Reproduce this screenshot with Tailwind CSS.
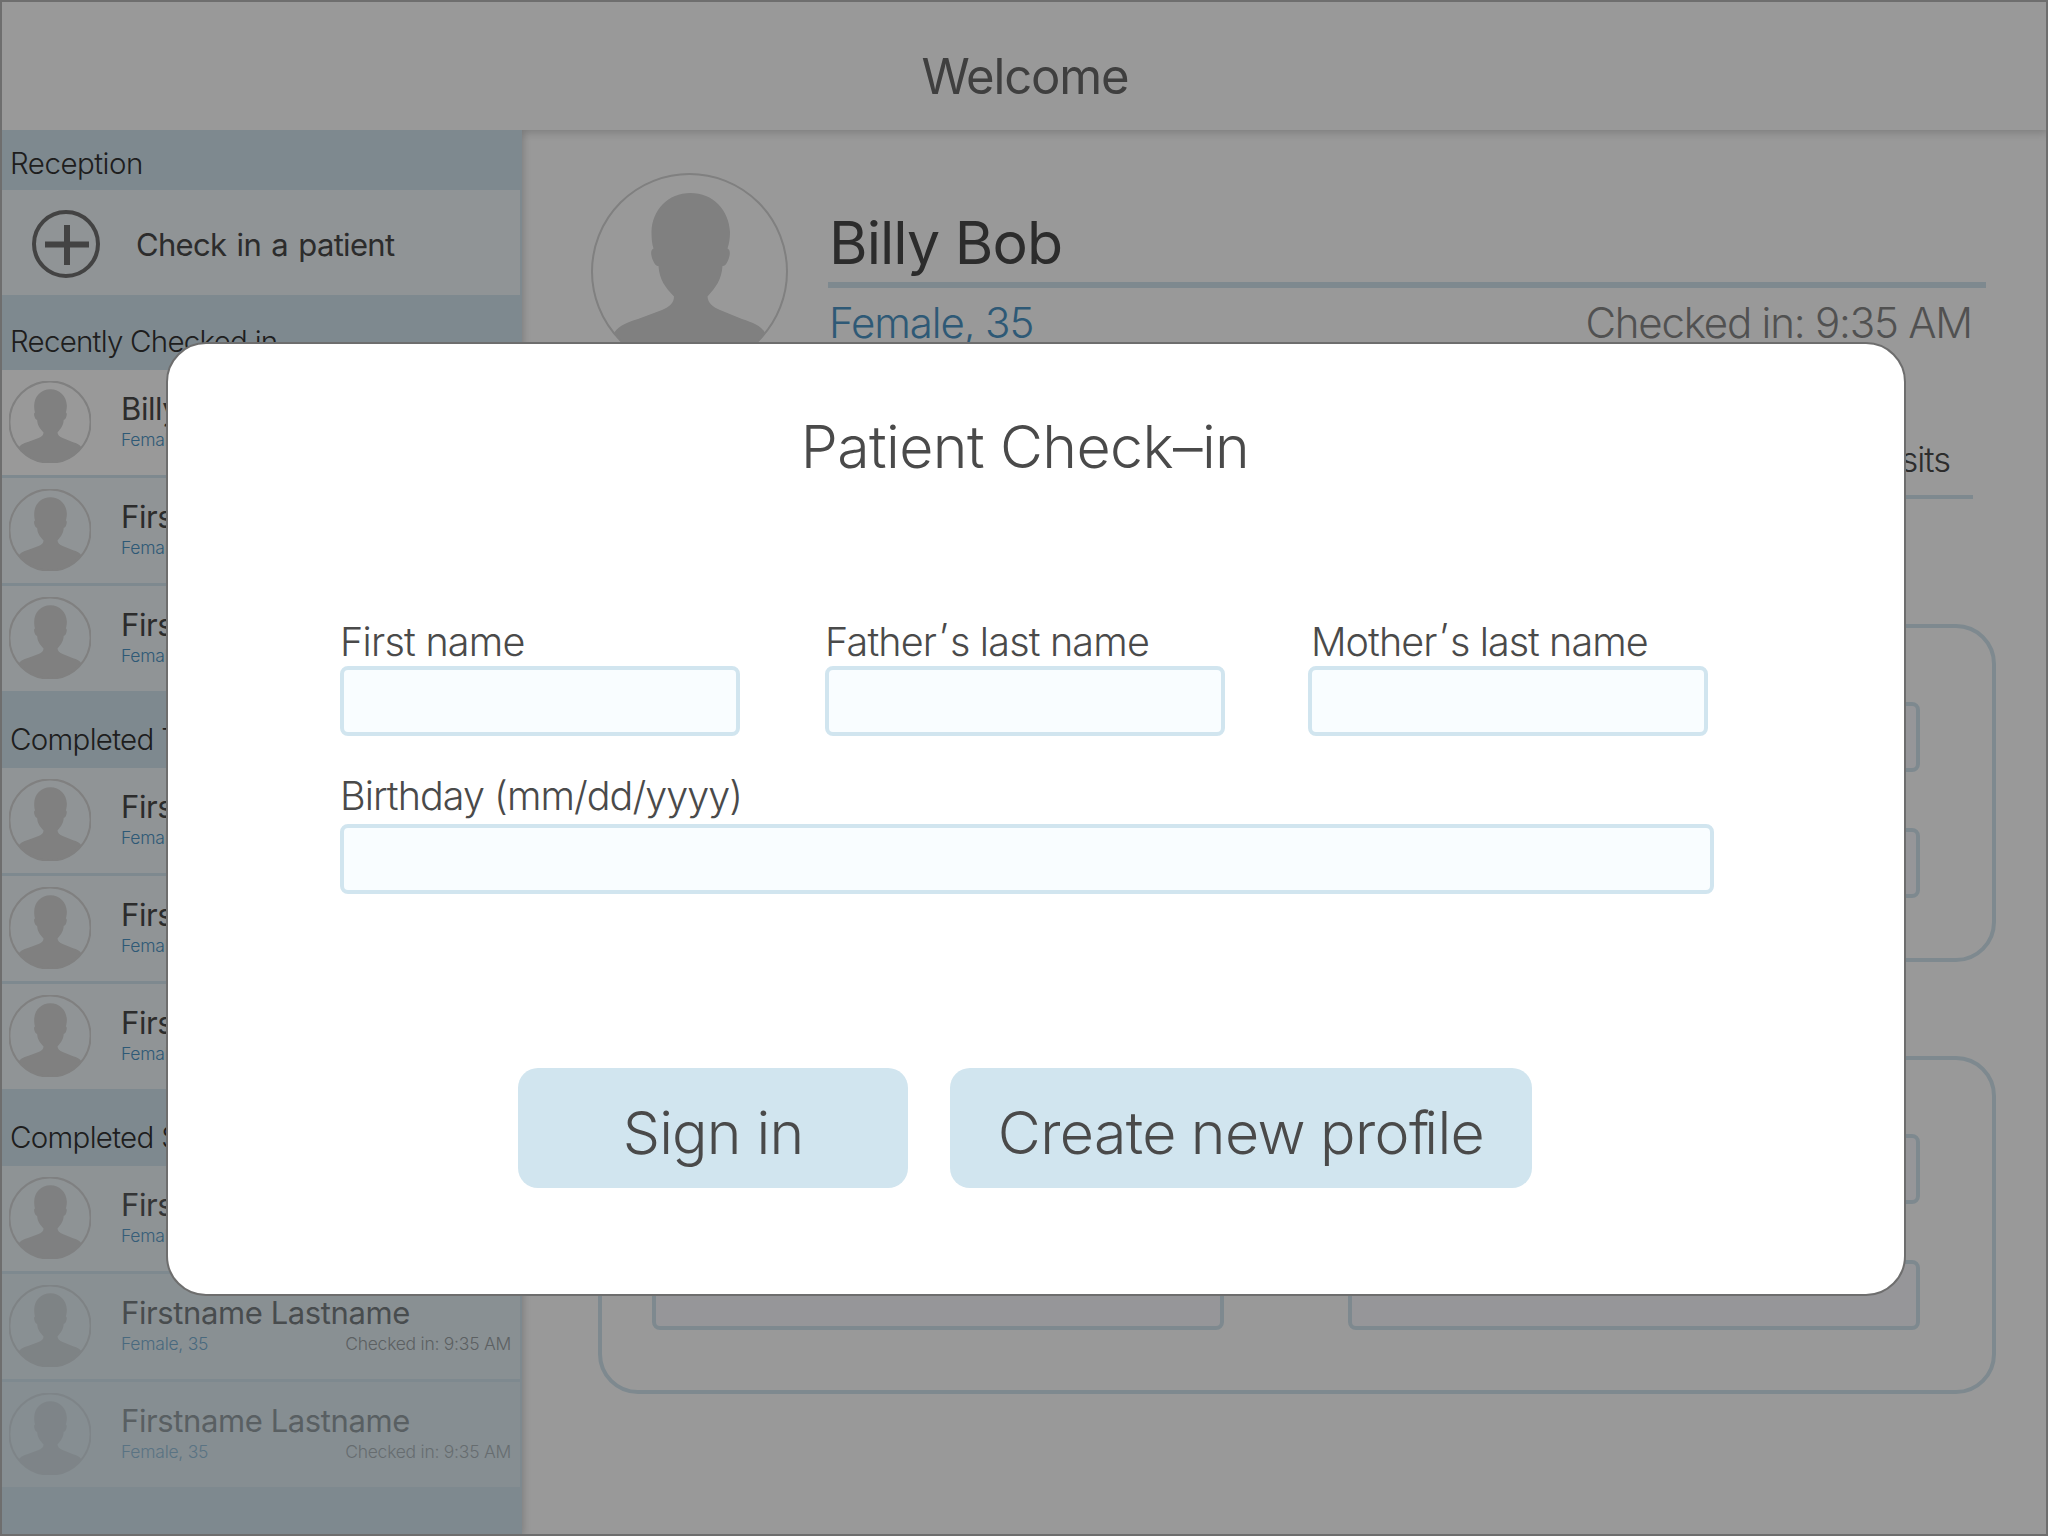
<!DOCTYPE html>
<html lang="en">
<head>
<meta charset="utf-8">
<title>Patient Check-in</title>
<script src="https://cdn.jsdelivr.net/npm/@tailwindcss/browser@4"></script>
</head>
<body class="relative flex h-[1536px] w-[2048px] flex-col overflow-hidden bg-white font-['Inter',sans-serif] font-light text-[#4a4a4a]">
<svg class="hidden">
  <symbol id="person" viewBox="0 0 197 197">
    <path fill="#d5d5d5" d="M99.500 20C77 20 61 37 60.500 59C60.500 66 61 71 62.500 75.500C59 77 60 83 62 87.500C64 92 65.500 93 67.500 93C68.500 107 74 114 83 123.500C83 130 78.500 134 71 137L47 146C33 150 25 155 22.800 161A98 98 0 0 0 174.200 161C173 155 164 150 151 146L129 137C121.500 134 117 130 116.500 123.500C125 114 130.500 107 131.500 93C133.500 93 135 92 137 87.500C139 83 140 77 136.500 75.500C138 71 139 66 139 59C138 37 122 20 99.500 20Z"/>
    <circle cx="98.5" cy="98.5" r="97.5" fill="none" stroke="#d5d5d5" stroke-width="2" vector-effect="non-scaling-stroke"/>
  </symbol>
</svg>

<header class="relative flex h-[130px] shrink-0 items-center justify-center bg-white pt-6 shadow-[0_2px_9px_0_rgba(0,0,0,0.2)]">
  <h1 class="pl-0.5 text-[49px] font-normal leading-[60px] tracking-[-1.15px] text-[#6a6a6a]">Welcome</h1>
</header>

<div class="flex min-h-0 flex-1">
  <aside class="relative flex w-[522px] shrink-0 flex-col bg-[#d2e5ef] pr-0.5 shadow-[1px_0_8px_0_rgba(0,0,0,0.2)] [clip-path:inset(0_-20px_0_0)]">
    <h2 class="flex h-[60px] shrink-0 items-end pb-[9px] pl-[10px] text-[29.5px] leading-[36px] tracking-[-0.5px] text-[#333]">Reception</h2>
    <div class="flex h-[105px] shrink-0 items-center gap-[36px] bg-[#f0f7fa] pl-8 pt-[3px]">
      <svg class="size-[68px]" viewBox="0 0 68 68" fill="none" stroke="#707070"><circle cx="34" cy="34" r="32" stroke-width="4"/><path d="M13 34.500H57M35 15V55" stroke-width="6"/></svg>
      <span class="pt-px text-[31px] font-normal leading-9 tracking-[-0.7px] [word-spacing:2.3px]">Check in a patient</span>
    </div>
    <h2 class="flex h-[75px] shrink-0 items-end pb-[11px] pl-[10px] text-[29.5px] leading-[36px] tracking-[-0.75px] text-[#333]">Recently Checked in</h2>
    <div class="patients flex flex-col" data-names="Billy Bob|Firstname Lastname|Firstname Lastname"></div>
    <h2 class="flex h-[77px] shrink-0 items-end pb-[11px] pl-[10px] text-[29.5px] leading-[36px] tracking-[-0.7px] text-[#333]">Completed Triage</h2>
    <div class="patients flex flex-col" data-names="Firstname Lastname|Firstname Lastname|Firstname Lastname"></div>
    <h2 class="flex h-[77px] shrink-0 items-end pb-[11px] pl-[10px] text-[29.5px] leading-[36px] tracking-[-0.7px] text-[#333]">Completed Soap</h2>
    <div class="patients flex flex-col" data-names="Firstname Lastname|Firstname Lastname|Firstname Lastname" data-fade="1"></div>
  </aside>

  <main class="flex min-w-0 flex-1 flex-col pt-[43px]">
    <section class="flex h-[197px] gap-10 pl-[69px] pr-[62px]">
      <svg class="size-[197px] shrink-0"><use href="#person"/></svg>
      <div class="flex-1 pt-[34px]">
        <h2 class="h-[81px] border-b-6 border-[#d2e5ef] pl-px text-[59px] font-normal leading-[72px] tracking-[-0.94px]">Billy Bob</h2>
        <div class="mt-2.5 flex justify-between pl-px pr-[14px] text-[42px] leading-[50px]">
          <span class="tracking-[-1.1px] text-[#4e95c5]">Female, 35</span>
          <span class="tracking-[-1.2px] text-[#878787]">Checked in: 9:35 AM</span>
        </div>
      </div>
    </section>
    <nav class="ml-[69px] mr-[75px] mt-[68px] flex h-[61px] justify-between border-b-4 border-[#d2e5ef] pl-6 pr-[23px] text-[34.5px] leading-[44px] tracking-[-1px]">
      <span>Profile</span><span>Visits</span>
    </nav>
    <section class="ml-[76px] mr-[52px] mt-[125px] grid h-[338px] shrink-0 grid-cols-2 content-start gap-x-[124px] gap-y-14 rounded-[40px] border-4 border-[#d2e5ef] pl-[50px] pr-[72px] pt-[74px]">
      <div class="h-[70px] rounded-lg border-4 border-[#d2e5ef] bg-[#fafbff]"></div><div class="h-[70px] rounded-lg border-4 border-[#d2e5ef] bg-[#fafbff]"></div>
      <div class="h-[70px] rounded-lg border-4 border-[#d2e5ef] bg-[#fafbff]"></div><div class="h-[70px] rounded-lg border-4 border-[#d2e5ef] bg-[#fafbff]"></div>
    </section>
    <section class="ml-[76px] mr-[52px] mt-[94px] grid h-[338px] shrink-0 grid-cols-2 content-start gap-x-[124px] gap-y-14 rounded-[40px] border-4 border-[#d2e5ef] pl-[50px] pr-[72px] pt-[74px]">
      <div class="h-[70px] rounded-lg border-4 border-[#d2e5ef] bg-[#fafbff]"></div><div class="h-[70px] rounded-lg border-4 border-[#d2e5ef] bg-[#fafbff]"></div>
      <div class="h-[70px] rounded-lg border-4 border-[#d2e5ef] bg-[#fafbff]"></div><div class="h-[70px] rounded-lg border-4 border-[#d2e5ef] bg-[#fafbff]"></div>
    </section>
  </main>
</div>

<!-- dimmed backdrop -->
<div class="absolute inset-0 border-2 border-[#6e6e6e] bg-black/40"></div>

<div role="dialog" class="absolute left-[166px] top-[342px] h-[954px] w-[1740px] rounded-[40px] border-2 border-[#6e6e6e] bg-white pt-[67px]">
  <h2 class="pr-[22px] text-center text-[59px] leading-[72px] tracking-[-0.6px]">Patient Check–in</h2>
  <form class="ml-[172px] mt-[135px] text-[39.5px] leading-[48px]">
    <div class="flex">
      <label class="w-[400px] tracking-[-0.76px]">First name<span class="block h-[70px] rounded-lg border-4 border-[#d1e5ef] bg-[#f9fdff]"></span></label>
      <label class="ml-[85px] w-[400px] tracking-[-0.82px]">Father<span class="relative -top-1 mx-[2.5px]">’</span>s last name<span class="block h-[70px] rounded-lg border-4 border-[#d1e5ef] bg-[#f9fdff]"></span></label>
      <label class="ml-[83px] w-[400px] tracking-[-0.95px]"><span class="pl-[3px]">Mother<span class="relative -top-1 mx-[2.5px]">’</span>s last name</span><span class="block h-[70px] rounded-lg border-4 border-[#d1e5ef] bg-[#f9fdff]"></span></label>
    </div>
    <label class="mt-9 block w-[1374px] tracking-[-0.95px]">Birthday (mm/dd/yyyy)<span class="mt-1 block h-[70px] rounded-lg border-4 border-[#d1e5ef] bg-[#f9fdff]"></span></label>
    <div class="ml-[178px] mt-[174px] flex gap-[42px] text-[59px] leading-[72px]">
      <button type="button" class="h-[120px] w-[390px] rounded-[20px] bg-[#d1e5ef] pt-[9px] tracking-[-0.83px]">Sign in</button>
      <button type="button" class="h-[120px] w-[582px] rounded-[20px] bg-[#d1e5ef] pt-[9px] tracking-[-0.6px] [word-spacing:-1px]">Create new pro<span class="tracking-[-5px]">f</span>ile</button>
    </div>
  </form>
</div>

<script>
document.querySelectorAll('.patients').forEach(list => {
  const fade = list.dataset.fade;
  list.innerHTML = list.dataset.names.split('|').map((name, i) => `
    <div class="${i < 2 ? 'h-[108px] border-b-3 border-[#d2e5ef]' : 'h-[105px]'} ${name === 'Billy Bob' ? 'bg-white' : 'bg-[#f0f7fa]'} ${fade ? ['opacity-90', 'opacity-65', 'opacity-45'][i] : ''} flex gap-[30px] pl-[9px] pr-[9px]">
      <svg class="mt-[11px] size-[82px] shrink-0"><use href="#person"/></svg>
      <div class="flex-1 pt-[21px]">
        <div class="text-[31px] font-normal leading-9 tracking-[-0.4px]">${name}</div>
        <div class="mt-[3px] flex justify-between text-[17.5px] leading-5 tracking-[-0.25px]">
          <span class="text-[#4e95c5]">Female, 35</span><span class="text-[#7c7c7c]">Checked in: 9:35 AM</span>
        </div>
      </div>
    </div>`).join('');
});
</script>
</body>
</html>
